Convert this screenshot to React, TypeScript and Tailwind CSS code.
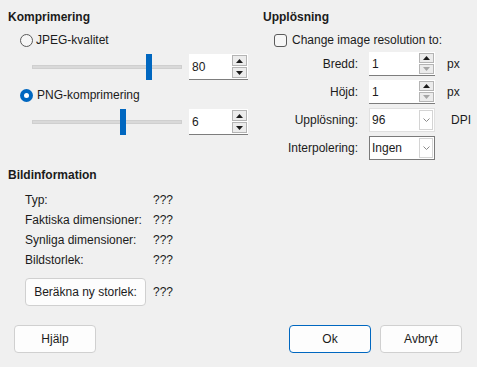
import React from "react";

function Arrow({ up, disabled }: { up?: boolean; disabled?: boolean }) {
  return (
    <svg width="7" height="4" viewBox="0 0 7 4">
      <polygon
        points={up ? "0,4 7,4 3.5,0" : "0,0 7,0 3.5,4"}
        fill={disabled ? "#a6a6a6" : "#1b1b1b"}
      />
    </svg>
  );
}

function Spin({
  value,
  downDisabled,
  className,
}: {
  value: string;
  downDisabled?: boolean;
  className: string;
}) {
  return (
    <div className={`flex bg-white border-b border-[#7d7d7d] ${className}`}>
      <div className="flex-1 flex items-center pl-[3px]">{value}</div>
      <div className="flex flex-col w-[15px] mr-[1px] py-[1px] gap-[1px]">
        <div className="flex-1 flex items-center justify-center bg-[#ececec] border border-[#b4b4b4]">
          <Arrow up />
        </div>
        <div className="flex-1 flex items-center justify-center bg-[#ececec] border border-[#b4b4b4]">
          <Arrow disabled={downDisabled} />
        </div>
      </div>
    </div>
  );
}

function Combo({ value, focused }: { value: string; focused?: boolean }) {
  return (
    <div
      className={`flex h-[24px] w-[66px] bg-white border ${
        focused ? "border-[#7a7a7a]" : "border-[#e0e0e0]"
      }`}
    >
      <div className="flex-1 flex items-center pl-[2px]">{value}</div>
      <div className="w-[14px] my-[1px] mr-[1px] flex items-center justify-center border border-[#d4d4d4]">
        <svg width="7" height="4" viewBox="0 0 7 4">
          <polyline points="0.5,0.5 3.5,3.5 6.5,0.5" fill="none" stroke="#8a8a8a" strokeWidth="1" />
        </svg>
      </div>
    </div>
  );
}

function Slider({ pos }: { pos: number }) {
  return (
    <div className="relative w-[150px] h-[26px] flex items-center">
      <div className="w-full h-[4px] bg-[#d9d9d9] border border-[#cfcfcf]" />
      <div
        className="absolute top-0 w-[6px] h-[26px] bg-[#0067c0]"
        style={{ left: pos }}
      />
    </div>
  );
}

function Button({ label, primary, className }: { label: string; primary?: boolean; className?: string }) {
  return (
    <div
      className={`h-[28px] w-[82px] flex items-center justify-center rounded-[4px] bg-[#fdfdfd] border ${
        primary ? "border-[#0067c0]" : "border-[#d0d0d0]"
      } ${className ?? ""}`}
    >
      {label}
    </div>
  );
}

export default function App() {
  return (
    <div className="w-[477px] h-[367px] bg-[#f0f0f0] text-[12px] leading-[16px] text-[#1b1b1b] font-['Segoe_UI','Liberation_Sans',sans-serif] flex flex-col">
      <div className="flex pt-[9px]">
        {/* Komprimering */}
        <div className="w-[263px] pl-[8px] flex flex-col">
          <div className="font-bold h-[16px]">Komprimering</div>
          <div className="mt-[7px] ml-[12px] h-[16px] flex items-center gap-[3px]">
            <div className="w-[13px] h-[13px] rounded-full border border-[#5a5a5a] bg-[#f6f6f6]" />
            <span>JPEG-kvalitet</span>
          </div>
          <div className="mt-[6px] ml-[24px] flex items-center gap-[7px]">
            <Slider pos={114} />
            <Spin value="80" className="w-[59px] h-[26px]" />
          </div>
          <div className="mt-[7px] ml-[12px] h-[16px] flex items-center gap-[4px]">
            <div className="w-[13px] h-[13px] rounded-full bg-[#0067c0] flex items-center justify-center">
              <div className="w-[5px] h-[5px] rounded-full bg-white" />
            </div>
            <span>PNG-komprimering</span>
          </div>
          <div className="mt-[6px] ml-[24px] flex items-center gap-[7px]">
            <Slider pos={88} />
            <Spin value="6" className="w-[59px] h-[26px]" />
          </div>
        </div>

        {/* Upplösning */}
        <div className="flex-1 flex flex-col">
          <div className="font-bold h-[16px]">Upplösning</div>
          <div className="mt-[7px] ml-[11px] h-[16px] flex items-center gap-[5px]">
            <div className="w-[13px] h-[13px] rounded-[3px] border border-[#5a5a5a] bg-[#f6f6f6]" />
            <span>Change image resolution to:</span>
          </div>
          <div className="mt-[4px] grid grid-cols-[97px_66px_auto] gap-y-[4px] items-center">
            <div className="text-right pr-[2px]">Bredd:</div>
            <Spin value="1" downDisabled className="ml-[9px] w-[66px] h-[24px]" />
            <div className="pl-[21px]">px</div>
            <div className="text-right pr-[2px]">Höjd:</div>
            <Spin value="1" downDisabled className="ml-[9px] w-[66px] h-[24px]" />
            <div className="pl-[21px]">px</div>
            <div className="text-right pr-[2px]">Upplösning:</div>
            <div className="ml-[9px]">
              <Combo value="96" />
            </div>
            <div className="pl-[25px]">DPI</div>
            <div className="text-right pr-[2px]">Interpolering:</div>
            <div className="ml-[9px]">
              <Combo value="Ingen" focused />
            </div>
            <div />
          </div>
        </div>
      </div>

      {/* Bildinformation */}
      <div className="pl-[8px] mt-[7px] flex flex-col">
        <div className="font-bold h-[16px]">Bildinformation</div>
        <div className="mt-[7px] ml-[17px] grid grid-cols-[128px_auto] auto-rows-[20px] items-center">
          <div>Typ:</div>
          <div>???</div>
          <div>Faktiska dimensioner:</div>
          <div>???</div>
          <div>Synliga dimensioner:</div>
          <div>???</div>
          <div>Bildstorlek:</div>
          <div>???</div>
        </div>
        <div className="mt-[8px] ml-[17px] flex items-center gap-[7px]">
          <Button label="Beräkna ny storlek:" className="w-[121px]" />
          <span>???</span>
        </div>
      </div>

      <div className="mt-auto pb-[14px] px-[14px] flex items-center">
        <Button label="Hjälp" />
        <div className="flex-1" />
        <Button label="Ok" primary />
        <Button label="Avbryt" className="ml-[9px] mr-[1px]" />
      </div>
    </div>
  );
}
